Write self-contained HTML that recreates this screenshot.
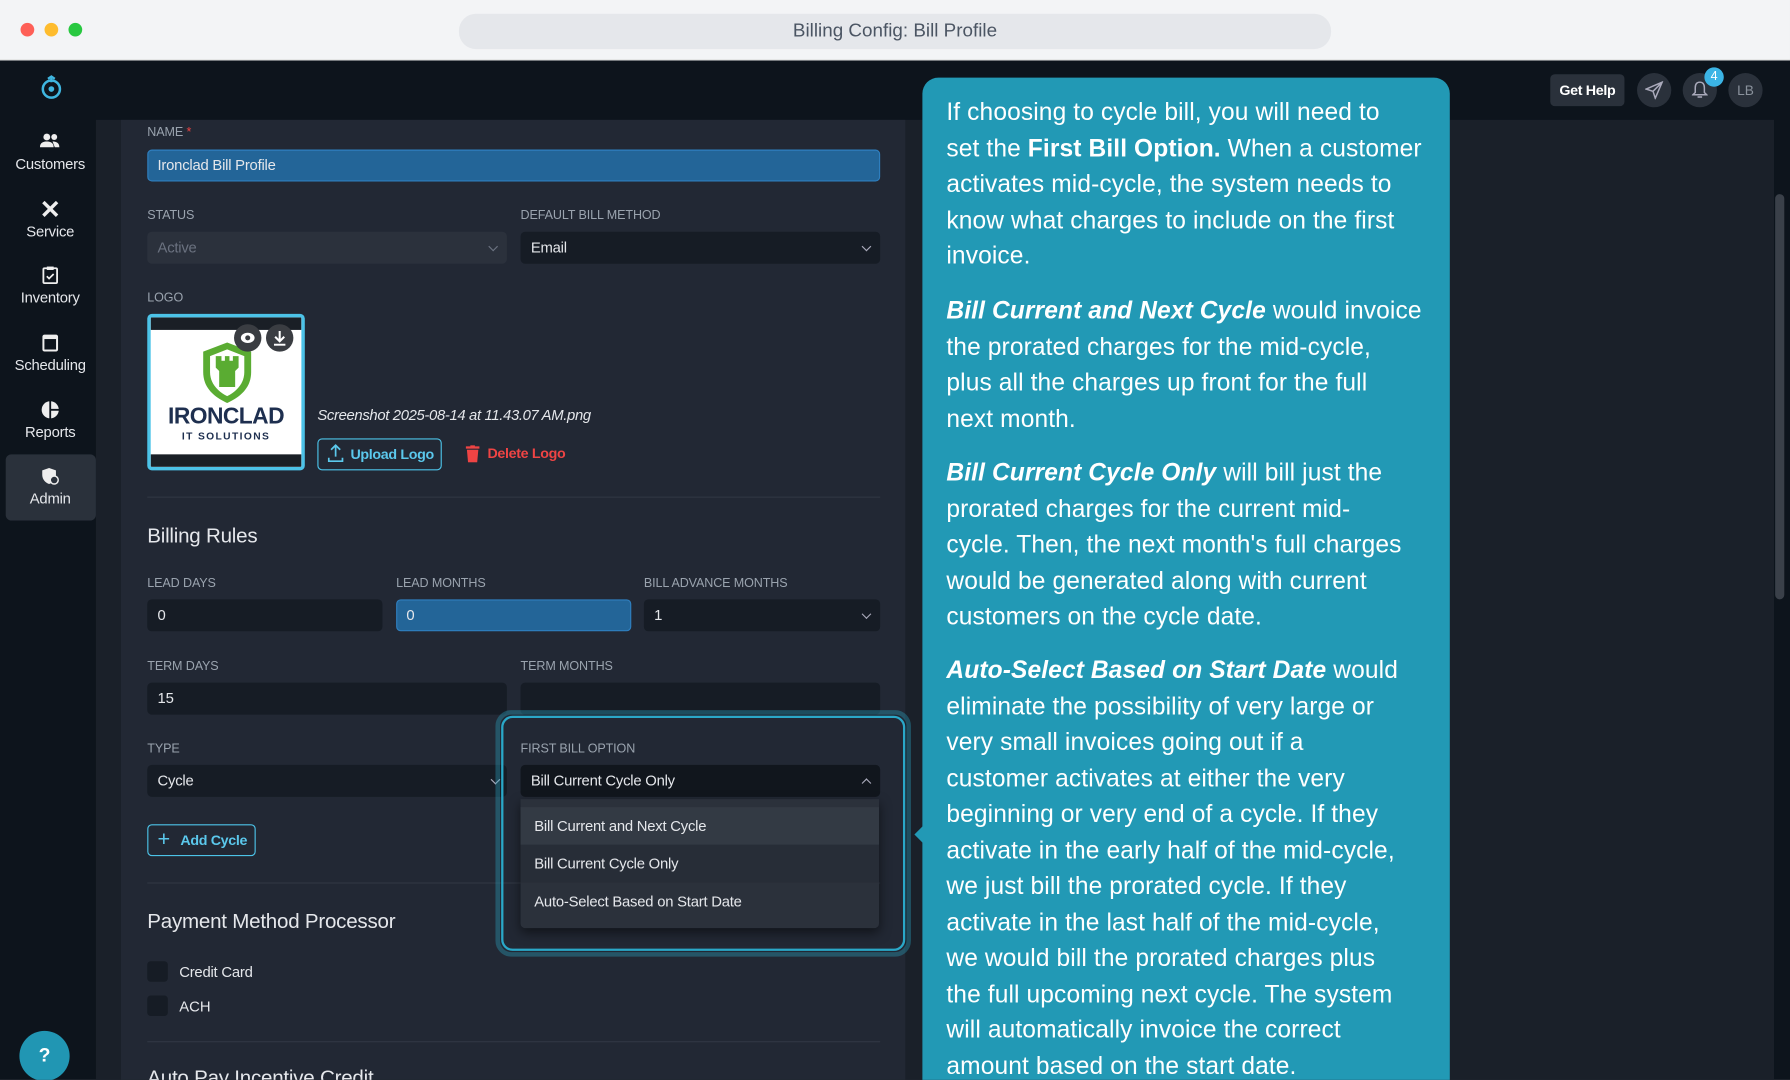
<!DOCTYPE html>
<html><head><meta charset="utf-8"><style>
*{box-sizing:border-box;margin:0;padding:0}
html,body{width:1790px;height:1080px;overflow:hidden;background:#fff;font-family:"Liberation Sans",sans-serif}
#w{position:absolute;left:0;top:0;width:1568px;height:946px;transform:scale(1.14158);transform-origin:0 0;overflow:hidden;background:#0d141c}
.a{position:absolute;white-space:nowrap}
.lbl{position:absolute;font-size:11px;color:#9aa3ae;letter-spacing:-.1px}
.in{position:absolute;height:28px;border-radius:4px;background:#161c25;color:#e5e7eb;font-size:13px;line-height:28px;padding-left:9px;letter-spacing:-.2px}
.chev{position:absolute;right:9px;top:10px;width:6px;height:6px;border-right:1.3px solid #aab;border-bottom:1.3px solid #aab;transform:rotate(45deg)}
.nav{position:absolute;left:3px;width:82px;text-align:center;color:#e5e7eb;font-size:13px;letter-spacing:-.2px}
.nav svg{display:block;margin:0 auto 4px}
.tt{position:absolute;left:829px;font-size:21.5px;color:#fff;line-height:31.5px;white-space:nowrap;letter-spacing:.1px}
.hr{position:absolute;left:129px;width:642px;height:1px;background:#303743}
.opt{position:absolute;left:0;width:314px;height:33px;line-height:33px;padding-left:12px;font-size:13px;color:#e5e7eb;letter-spacing:-.2px}
.btn{position:absolute;height:28px;border:1px solid #4cc3e8;border-radius:4px;color:#5bc8ec;font-size:12.5px;font-weight:bold;line-height:26px;letter-spacing:-.3px;white-space:nowrap}
</style></head><body><div id="w">
<div class="a" style="left:0;top:0;width:1568px;height:53px;background:#f3f4f6;border-bottom:1px solid #ddd"></div>
<div class="a" style="left:18px;top:20px;width:12px;height:12px;border-radius:50%;background:#fe5f57"></div>
<div class="a" style="left:39px;top:20px;width:12px;height:12px;border-radius:50%;background:#febc2e"></div>
<div class="a" style="left:60px;top:20px;width:12px;height:12px;border-radius:50%;background:#28c840"></div>
<div class="a" style="left:402px;top:12px;width:764px;height:31px;border-radius:15px;background:#e5e7eb;text-align:center;line-height:31px;font-size:16.5px;color:#4b5563">Billing Config: Bill Profile</div>
<div class="a" style="left:84px;top:105px;width:1470px;height:841px;background:#1a2029"></div>
<div class="a" style="left:106px;top:105px;width:687px;height:841px;background:#222834"></div>
<div class="a" style="left:1555px;top:170px;width:8px;height:355px;border-radius:4px;background:#3a4049"></div>
<svg class="a" style="left:34px;top:65px" width="22" height="24" viewBox="0 0 22 24"><circle cx="11" cy="13" r="7.5" fill="none" stroke="#3fb6e0" stroke-width="2.2"/><circle cx="11" cy="13" r="2.5" fill="#3fb6e0"/><path d="M11 3 v4 M8 4 l3-2 3 2" stroke="#3fb6e0" stroke-width="2" fill="none"/></svg>
<div class="a" style="left:5px;top:398px;width:79px;height:58px;border-radius:5px;background:#2a313b"></div>
<div class="nav" style="top:116px"><svg width="18" height="16" viewBox="0 0 18 16"><circle cx="6" cy="4" r="3" fill="#eee"/><circle cx="12.5" cy="4" r="2.6" fill="#eee"/><path d="M0 13c0-4 3-5 6-5s6 1 6 5z M11 8c3 0 6 1 6 5h-4z" fill="#eee"/></svg>Customers</div>
<div class="nav" style="top:175px"><svg width="16" height="16" viewBox="0 0 16 16"><path d="M2 2l12 12M14 2L2 14" stroke="#eee" stroke-width="3"/></svg>Service</div>
<div class="nav" style="top:233px"><svg width="14" height="16" viewBox="0 0 14 16"><rect x="1" y="2" width="12" height="13" rx="1" fill="none" stroke="#eee" stroke-width="1.6"/><rect x="4" y="0.5" width="6" height="3" fill="#eee"/><path d="M4 9l2 2 4-4" stroke="#eee" stroke-width="1.5" fill="none"/></svg>Inventory</div>
<div class="nav" style="top:292px"><svg width="14" height="16" viewBox="0 0 14 16"><rect x="1" y="2" width="12" height="13" rx="1" fill="none" stroke="#eee" stroke-width="1.8"/><rect x="1" y="2" width="12" height="3" fill="#eee"/></svg>Scheduling</div>
<div class="nav" style="top:351px"><svg width="16" height="16" viewBox="0 0 16 16"><circle cx="8" cy="8" r="7.5" fill="#eee"/><path d="M8 0v16M8 8h8" stroke="#0d141c" stroke-width="1.6"/></svg>Reports</div>
<div class="nav" style="top:409px"><svg width="16" height="16" viewBox="0 0 16 16"><path d="M7 1l6 2v4c0 4-3 7-6 8-3-1-6-4-6-8V3z" fill="#eee"/><circle cx="11.5" cy="11.5" r="3.5" fill="#2a313b" stroke="#eee" stroke-width="1.3"/></svg>Admin</div>
<div class="a" style="left:17px;top:903px;width:44px;height:44px;border-radius:50%;background:#2196b3;color:#fff;text-align:center;line-height:44px;font-size:17px;font-weight:bold">?</div>
<div class="a" style="left:1358px;top:65px;width:65px;height:28px;border-radius:4px;background:#2a313b;color:#fff;font-size:12.5px;font-weight:bold;text-align:center;line-height:28px;letter-spacing:-.3px">Get Help</div>
<div class="a" style="left:1434px;top:64px;width:30px;height:30px;border-radius:50%;background:#2a313b"></div>
<svg class="a" style="left:1441px;top:71px" width="16" height="16" viewBox="0 0 16 16"><path d="M15 1L1 7l6 2 2 6z M7 9l8-8" fill="none" stroke="#aab" stroke-width="1.3"/></svg>
<div class="a" style="left:1474px;top:64px;width:30px;height:30px;border-radius:50%;background:#2a313b"></div>
<svg class="a" style="left:1482px;top:71px" width="14" height="16" viewBox="0 0 14 16"><path d="M7 1c-3 0-4 2-4 5v4l-2 2h12l-2-2V6c0-3-1-5-4-5z M5 14h4" fill="none" stroke="#aab" stroke-width="1.3"/></svg>
<div class="a" style="left:1493px;top:59px;width:17px;height:17px;border-radius:50%;background:#3bb4e5;color:#fff;font-size:11px;text-align:center;line-height:17px">4</div>
<div class="a" style="left:1514px;top:64px;width:30px;height:30px;border-radius:50%;background:#2a313b;color:#8a929c;font-size:12px;text-align:center;line-height:30px">LB</div>
<div class="lbl" style="left:129px;top:110px">NAME <span style="color:#ef4444">*</span></div>
<div class="in" style="left:129px;top:131px;width:642px;height:28px;background:#236598;border:1px solid #2f7fbf;line-height:26px;padding-left:8px">Ironclad Bill Profile</div>
<div class="lbl" style="left:129px;top:183px">STATUS</div>
<div class="lbl" style="left:456px;top:183px">DEFAULT BILL METHOD</div>
<div class="in" style="left:129px;top:203px;width:315px;background:#2b313c;color:#6b7280">Active<div class="chev" style="border-color:#6b7280"></div></div>
<div class="in" style="left:456px;top:203px;width:315px">Email<div class="chev"></div></div>
<div class="lbl" style="left:129px;top:255px">LOGO</div>
<div class="a" style="left:129px;top:275px;width:138px;height:137px;border:3px solid #4cc3e8;border-radius:4px;background:#fff;overflow:hidden">
 <div class="a" style="left:0;top:0;width:132px;height:11px;background:#1a1f26"></div>
 <div class="a" style="left:0;bottom:0;width:132px;height:11px;background:#1a1f26"></div>
 <svg class="a" style="left:42px;top:20px" width="50" height="56" viewBox="0 0 50 56"><path d="M25 2l21 8v18c0 14-10 22-21 27C14 50 4 42 4 28V10z" fill="#5aac32"/><path d="M25 8l15 6v14c0 10-7 17-15 21-8-4-15-11-15-21V14z" fill="#fff"/><path d="M15 14h5v4h3v-4h4v4h3v-4h5v10l-3 3v14H18V27l-3-3z" fill="#5aac32"/></svg>
 <div class="a" style="left:0;top:76px;width:132px;text-align:center;font-weight:bold;font-size:20px;color:#1e2f4f;letter-spacing:-.5px">IRONCLAD</div>
 <div class="a" style="left:0;top:99px;width:132px;text-align:center;font-weight:bold;font-size:9px;color:#1e2f4f;letter-spacing:1.2px">IT SOLUTIONS</div>
 <div class="a" style="left:73px;top:6px;width:24px;height:24px;border-radius:50%;background:#3a3d42"></div>
 <div class="a" style="left:101px;top:6px;width:24px;height:24px;border-radius:50%;background:#3a3d42"></div>
 <svg class="a" style="left:78px;top:12px" width="14" height="12" viewBox="0 0 14 12"><ellipse cx="7" cy="6" rx="6" ry="4.5" fill="#fff"/><circle cx="7" cy="6" r="2.2" fill="#3a3d42"/></svg>
 <svg class="a" style="left:107px;top:11px" width="12" height="14" viewBox="0 0 12 14"><path d="M6 1v8M2 6l4 4 4-4M1 13h10" stroke="#fff" stroke-width="1.8" fill="none"/></svg>
</div>
<div class="a" style="left:278px;top:356px;font-size:13px;font-style:italic;color:#e5e7eb;letter-spacing:-.3px">Screenshot 2025-08-14 at 11.43.07 AM.png</div>
<div class="btn" style="left:278px;top:384px;width:109px;padding-left:28px">Upload Logo</div>
<svg class="a" style="left:287px;top:389px" width="14" height="16" viewBox="0 0 14 16"><path d="M7 1v10M3 5l4-4 4 4M1 12v3h12v-3" stroke="#5bc8ec" stroke-width="1.5" fill="none"/></svg>
<svg class="a" style="left:408px;top:390px" width="12" height="15" viewBox="0 0 12 15"><rect x="0" y="1" width="12" height="2" fill="#ef4444"/><rect x="4" y="0" width="4" height="2" fill="#ef4444"/><path d="M1 4h10l-1 11H2z" fill="#ef4444"/></svg>
<div class="a" style="left:427px;top:390px;font-size:12.5px;font-weight:bold;color:#ef4444;letter-spacing:-.3px">Delete Logo</div>
<div class="hr" style="top:435px"></div>
<div class="a" style="left:129px;top:459px;font-size:18px;color:#e5e7eb;letter-spacing:-.2px">Billing Rules</div>
<div class="lbl" style="left:129px;top:505px">LEAD DAYS</div>
<div class="lbl" style="left:347px;top:505px">LEAD MONTHS</div>
<div class="lbl" style="left:564px;top:505px">BILL ADVANCE MONTHS</div>
<div class="in" style="left:129px;top:525px;width:206px">0</div>
<div class="in" style="left:347px;top:525px;width:206px;background:#236598;border:1px solid #2f7fbf;line-height:26px;padding-left:8px">0</div>
<div class="in" style="left:564px;top:525px;width:207px">1<div class="chev"></div></div>
<div class="lbl" style="left:129px;top:578px">TERM DAYS</div>
<div class="lbl" style="left:456px;top:578px">TERM MONTHS</div>
<div class="in" style="left:129px;top:598px;width:315px">15</div>
<div class="in" style="left:456px;top:598px;width:315px"></div>
<div class="lbl" style="left:129px;top:650px">TYPE</div>
<div class="in" style="left:129px;top:670px;width:315px">Cycle<div class="chev" style="right:7px"></div></div>
<div class="btn" style="left:129px;top:722px;width:95px;padding-left:28px">Add Cycle</div>
<div class="a" style="left:138px;top:725px;color:#5bc8ec;font-size:19px">+</div>
<div class="hr" style="top:773px"></div>
<div class="a" style="left:129px;top:797px;font-size:18px;color:#e5e7eb;letter-spacing:-.2px">Payment Method Processor</div>
<div class="a" style="left:129px;top:842px;width:18px;height:18px;border-radius:3px;background:#161c25"></div>
<div class="a" style="left:157px;top:844px;font-size:13px;color:#e5e7eb;letter-spacing:-.2px">Credit Card</div>
<div class="a" style="left:129px;top:872px;width:18px;height:18px;border-radius:3px;background:#161c25"></div>
<div class="a" style="left:157px;top:874px;font-size:13px;color:#e5e7eb">ACH</div>
<div class="hr" style="top:912px"></div>
<div class="a" style="left:129px;top:934px;font-size:18px;color:#e5e7eb;letter-spacing:-.2px">Auto Pay Incentive Credit</div>
<div class="a" style="left:434px;top:622px;width:364px;height:216px;border-radius:14px;border:4px solid rgba(42,168,200,.35)"></div>
<div class="a" style="left:439px;top:627px;width:354px;height:206px;border-radius:10px;border:2.5px solid #2aa8c8"></div>
<div class="lbl" style="left:456px;top:650px">FIRST BILL OPTION</div>
<div class="in" style="left:456px;top:670px;width:315px;background:#11161d">Bill Current Cycle Only<div class="chev" style="transform:rotate(225deg);top:13px"></div></div>
<div class="a" style="left:456px;top:700px;width:314px;height:113px;background:#2b313b;box-shadow:0 4px 10px rgba(0,0,0,.5);border-radius:0 0 4px 4px">
 <div class="opt" style="top:7px;background:#333a44">Bill Current and Next Cycle</div>
 <div class="opt" style="top:40px;background:#272d37">Bill Current Cycle Only</div>
 <div class="opt" style="top:73px">Auto-Select Based on Start Date</div>
</div>
<div class="a" style="left:808px;top:68px;width:462px;height:900px;border-radius:14px;background:#2299b5"></div>
<div class="a" style="left:801px;top:723px;width:0;height:0;border-top:8px solid transparent;border-bottom:8px solid transparent;border-right:8px solid #2299b5"></div>
<div class="tt" style="top:83px">If choosing to cycle bill, you will need to<br>set the <b>First Bill Option.</b> When a customer<br>activates mid-cycle, the system needs to<br>know what charges to include on the first<br>invoice.</div>
<div class="tt" style="top:257px"><b><i>Bill Current and Next Cycle</i></b> would invoice<br>the prorated charges for the mid-cycle,<br>plus all the charges up front for the full<br>next month.</div>
<div class="tt" style="top:399px"><b><i>Bill Current Cycle Only</i></b> will bill just the<br>prorated charges for the current mid-<br>cycle. Then, the next month's full charges<br>would be generated along with current<br>customers on the cycle date.</div>
<div class="tt" style="top:572px"><b><i>Auto-Select Based on Start Date</i></b> would<br>eliminate the possibility of very large or<br>very small invoices going out if a<br>customer activates at either the very<br>beginning or very end of a cycle. If they<br>activate in the early half of the mid-cycle,<br>we just bill the prorated cycle. If they<br>activate in the last half of the mid-cycle,<br>we would bill the prorated charges plus<br>the full upcoming next cycle. The system<br>will automatically invoice the correct<br>amount based on the start date.</div>
</div></body></html>
